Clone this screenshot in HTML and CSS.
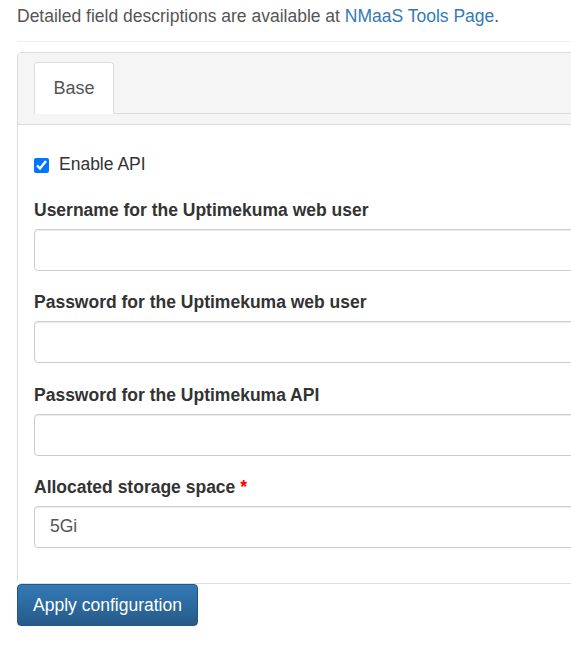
FILE: index.html
```html
<!DOCTYPE html>
<html>
<head>
<meta charset="utf-8">
<link rel="stylesheet" href="styles.css">
</head>
<body>
<div class="page">
  <p class="intro">Detailed field descriptions are available at <a href="#">NMaaS Tools Page</a>.</p>
  <hr class="sep">
  <div class="panel">
    <div class="panel-heading">
      <ul class="tabs">
        <li class="tab active">Base</li>
      </ul>
    </div>
    <div class="panel-body">
      <label class="check"><input type="checkbox" checked> <span>Enable API</span></label>
      <div class="group">
        <label class="lbl">Username for the Uptimekuma web user</label>
        <input class="field" type="text">
      </div>
      <div class="group">
        <label class="lbl">Password for the Uptimekuma web user</label>
        <input class="field" type="text">
      </div>
      <div class="group">
        <label class="lbl">Password for the Uptimekuma API</label>
        <input class="field" type="text">
      </div>
      <div class="group last">
        <label class="lbl">Allocated storage space <span class="req">*</span></label>
        <input class="field" type="text" value="5Gi">
      </div>
    </div>
  </div>
  <button class="btn">Apply configuration</button>
</div>
</body>
</html>
```
FILE: styles.css
```css
html, body {
  margin: 0;
  padding: 0;
  background: #fff;
  overflow: hidden;
}
body {
  font-family: "Liberation Sans", Arial, sans-serif;
  font-size: 17.5px;
  color: #333;
}
.page {
  width: 800px;
  padding: 4px 0 0 17px;
}
.intro {
  margin: 0;
  line-height: 25px;
  color: #555;
}
.intro a {
  color: #337ab7;
  text-decoration: none;
}
.sep {
  border: 0;
  border-top: 1px solid #eee;
  margin: 12px 0 10px 0;
}
.panel {
  border: 1px solid #ddd;
  border-radius: 4px 0 0 4px;
}
.panel-heading {
  background: #f5f5f5;
  padding: 9px 16px 10px;
  border-bottom: 1px solid #ddd;
}
.tabs {
  list-style: none;
  margin: 0;
  padding: 0;
  display: flex;
  border-bottom: 1px solid #ddd;
}
.tab {
  margin-bottom: -1px;
  height: 50px;
  width: 78px;
  display: flex;
  align-items: center;
  justify-content: center;
  font-size: 18px;
  color: #555;
  background: #fff;
  border: 1px solid #ddd;
  border-bottom-color: transparent;
  border-radius: 4px 4px 0 0;
}
.panel-body {
  background: #fff;
  padding: 27px 16px 16px;
}
.check {
  display: flex;
  align-items: center;
  height: 25px;
  margin-bottom: 21px;
  color: #333;
}
.check input {
  width: 15px;
  height: 15px;
  margin: 1px 10px 0 0;
  accent-color: #0075ff;
}
.group {
  margin-bottom: 19.33px;
}
.lbl {
  display: block;
  font-weight: bold;
  line-height: 25px;
  margin-bottom: 6px;
  color: #333;
}
.req {
  color: red;
}
.field {
  display: block;
  box-sizing: border-box;
  width: 700px;
  height: 42px;
  padding: 6px 15px;
  border: 1px solid #ccc;
  border-radius: 4px;
  font-family: "Liberation Sans", Arial, sans-serif;
  font-size: 17.5px;
  color: #555;
  box-shadow: inset 0 1px 1px rgba(0,0,0,0.075);
  outline: none;
}
.btn {
  display: block;
  margin: 0;
  height: 42px;
  width: 181px;
  border: 1px solid #245580;
  border-radius: 4px;
  background: linear-gradient(to bottom, #337ab7 0%, #265a88 100%);
  color: #fff;
  font-family: "Liberation Sans", Arial, sans-serif;
  font-size: 17.5px;
  padding: 0;
}
```
